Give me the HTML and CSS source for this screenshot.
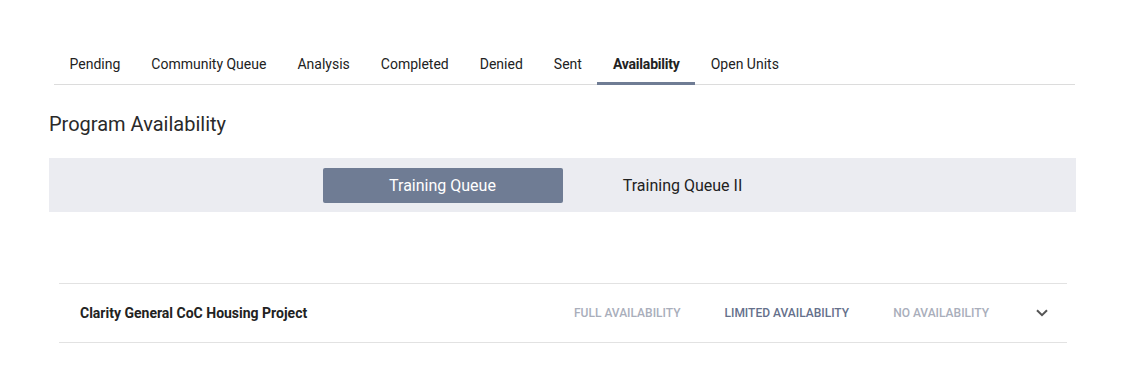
FILE: index.html
```html
<!DOCTYPE html>
<html lang="en">
<head>
  <meta charset="UTF-8">
  <title>Program Availability</title>
  <link rel="stylesheet" href="styles.css">
</head>
<body>
  <div class="page">
    <nav class="tabs">
      <a class="tab">Pending</a>
      <a class="tab">Community Queue</a>
      <a class="tab">Analysis</a>
      <a class="tab">Completed</a>
      <a class="tab">Denied</a>
      <a class="tab">Sent</a>
      <a class="tab active">Availability</a>
      <a class="tab">Open Units</a>
    </nav>

    <h1 class="title">Program Availability</h1>

    <div class="queue-bar">
      <button class="queue-btn selected">Training Queue</button>
      <button class="queue-btn">Training Queue II</button>
    </div>

    <div class="program-list">
      <div class="program-row">
        <span class="program-name">Clarity General CoC Housing Project</span>
        <div class="levels">
          <span class="level">Full Availability</span>
          <span class="level current">Limited Availability</span>
          <span class="level">No Availability</span>
          <svg class="chevron" viewBox="0 0 12 8" width="12" height="8">
            <path d="M1 1.2l5 5 5-5" fill="none" stroke="#555" stroke-width="2"/>
          </svg>
        </div>
      </div>
    </div>
  </div>
</body>
</html>
```

FILE: styles.css
```css
/* Base */
body, html {
  margin: 0;
  padding: 0;
  font-family: Roboto, "Liberation Sans", Arial, sans-serif;
  color: #222;
  background: #fff;
}

.page {
  padding: 44px 49px 0 49px;
}

/* Tabs */
.tabs {
  display: flex;
  margin: 0 1px 0 5px;
  border-bottom: 1px solid #dcdcdc;
}

.tab {
  padding: 10px 15.5px 8px;
  font-size: 14px;
  line-height: 20px;
  color: #222;
  border-bottom: 3px solid transparent;
  margin-bottom: -1px;
}

.tab.active {
  font-weight: 700;
  letter-spacing: -0.2px;
  border-bottom-color: #6f7c94;
}

/* Heading */
.title {
  margin: 27px 0 22px;
  font-size: 20px;
  line-height: 24px;
  font-weight: 400;
  color: #2a2a2a;
}

/* Queue switch */
.queue-bar {
  display: flex;
  justify-content: center;
  align-items: center;
  height: 54px;
  background-color: #ebecf1;
}

.queue-btn {
  width: 240px;
  height: 35px;
  border: none;
  border-radius: 2px;
  background: transparent;
  font-family: inherit;
  font-size: 16px;
  color: #222;
  padding: 0;
}

.queue-btn.selected {
  background-color: #6f7c94;
  color: #fff;
}

/* Program rows */
.program-list {
  margin: 71px 9px 0 10px;
}

.program-row {
  display: flex;
  align-items: center;
  justify-content: space-between;
  height: 58px;
  padding: 0 19px 0 21px;
  border-top: 1px solid #e2e2e2;
  border-bottom: 1px solid #e2e2e2;
}

.program-name {
  font-size: 14px;
  font-weight: 700;
  color: #222;
  margin-top: -1px;
}

.levels {
  display: flex;
  align-items: center;
  gap: 44px;
}

.level {
  font-size: 12px;
  font-weight: 500;
  text-transform: uppercase;
  color: #a9aebb;
}

.level.current {
  color: #65708b;
}

.chevron {
  display: block;
  margin-left: 3px;
}
```
